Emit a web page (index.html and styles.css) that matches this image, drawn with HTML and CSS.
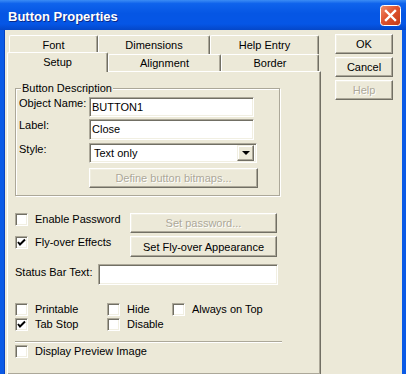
FILE: index.html
```html
<!DOCTYPE html>
<html lang="en">
<head>
  <meta charset="UTF-8" />
  <title>Button Properties</title>
  <link rel="stylesheet" href="styles.css">
</head>
<body>
  <div class="window">
    <div class="titlebar">
      <span class="title">Button Properties</span>
      <span class="close">
        <svg width="21" height="21" viewBox="0 0 21 21">
          <defs>
            <linearGradient id="closeGrad" x1="0" y1="0" x2="1" y2="1">
              <stop offset="0" stop-color="#F0906F"/>
              <stop offset="0.45" stop-color="#E0532F"/>
              <stop offset="1" stop-color="#C23A16"/>
            </linearGradient>
          </defs>
          <rect x="0.5" y="0.5" width="20" height="20" rx="3" fill="url(#closeGrad)" stroke="#fff"/>
          <path d="M6 6 L15 15 M15 6 L6 15" stroke="#fff" stroke-width="2.4" stroke-linecap="square"/>
        </svg>
      </span>
    </div>

    <div class="frame">
      <div class="sheet">
        <div class="tab-row back">
          <div class="tab tab-font">Font</div>
          <div class="tab tab-dim">Dimensions</div>
          <div class="tab tab-help">Help Entry</div>
        </div>
        <div class="tab-row front">
          <div class="tab tab-setup selected">Setup</div>
          <div class="tab tab-align">Alignment</div>
          <div class="tab tab-border">Border</div>
        </div>

        <div class="panel">
          <fieldset class="group">
            <legend>Button Description</legend>
            <div class="field">
              <span class="field-label">Object Name:</span>
              <div class="input input-name">BUTTON1</div>
            </div>
            <div class="field field-label-row">
              <span class="field-label">Label:</span>
              <div class="input input-label">Close</div>
            </div>
            <div class="field field-style">
              <span class="field-label">Style:</span>
              <div class="input combo">
                <span class="combo-text">Text only</span>
                <span class="combo-btn"><span class="arrow"></span></span>
              </div>
            </div>
            <button class="btn btn-define" disabled>Define button bitmaps...</button>
          </fieldset>

          <div class="option-row first">
            <label class="check-item wide"><span class="check"></span>Enable Password</label>
            <button class="btn btn-wide" disabled>Set password...</button>
          </div>
          <div class="option-row second">
            <label class="check-item wide">
              <span class="check"><svg width="11" height="11" viewBox="0 0 11 11"><polyline points="2,5 4,7.5 9,2.5" fill="none" stroke="#000" stroke-width="2"/></svg></span>Fly-over Effects
            </label>
            <button class="btn btn-wide btn-flyover">Set Fly-over Appearance</button>
          </div>

          <div class="status-row">
            <span class="status-label">Status Bar Text:</span>
            <div class="input input-status"></div>
          </div>

          <div class="flags">
            <label class="check-item"><span class="check"></span>Printable</label>
            <label class="check-item"><span class="check"></span>Hide</label>
            <label class="check-item"><span class="check"></span>Always on Top</label>
            <label class="check-item">
              <span class="check"><svg width="11" height="11" viewBox="0 0 11 11"><polyline points="2,5 4,7.5 9,2.5" fill="none" stroke="#000" stroke-width="2"/></svg></span>Tab Stop
            </label>
            <label class="check-item"><span class="check"></span>Disable</label>
          </div>

          <div class="separator"></div>

          <label class="check-item preview"><span class="check"></span>Display Preview Image</label>
        </div>
      </div>

      <div class="actions">
        <button class="btn">OK</button>
        <button class="btn">Cancel</button>
        <button class="btn" disabled>Help</button>
      </div>
    </div>
  </div>
</body>
</html>
```

FILE: styles.css
```css
* {
  margin: 0;
  padding: 0;
  box-sizing: border-box;
}

body {
  width: 406px;
  height: 374px;
  overflow: hidden;
  font-family: "Liberation Sans", Arial, sans-serif;
  font-size: 11px;
  line-height: 13px;
  color: #000;
  background-color: #ECE9D8;
}

.window {
  display: flex;
  flex-direction: column;
  height: 374px;
}

/* title bar */
.titlebar {
  height: 30px;
  flex: none;
  display: flex;
  align-items: center;
  justify-content: space-between;
  padding: 0 5px 0 8px;
  background: linear-gradient(#3B8CF5 0%, #0F63EC 12%, #0556E4 45%, #0556E6 80%, #0447C8 100%);
}

.title {
  color: #fff;
  font-weight: bold;
  font-size: 13px;
  text-shadow: 1px 1px #0A2A8A;
  padding-top: 2px;
}

.close {
  width: 21px;
  height: 21px;
  margin-top: 1px;
}

.close svg {
  display: block;
}

/* window body */
.frame {
  flex: 1;
  display: flex;
  align-items: flex-start;
  padding: 4px 0 0 3px;
  border-left: 4px solid #0A5AE6;
  border-right: 4px solid #0A5AE6;
  box-shadow: inset 1px 0 #0842C0;
}

.sheet {
  width: 314px;
  margin-top: 1px;
  height: 340px;
  display: flex;
  flex-direction: column;
}

.tab-row {
  display: flex;
  padding-left: 2px;
}

.tab-row.back { height: 19px; }
.tab-row.front { height: 17px; }

.tab {
  height: 100%;
  display: flex;
  align-items: center;
  justify-content: center;
  border-top: 1px solid #fff;
  border-left: 1px solid #fff;
  border-right: 1px solid #716F64;
  box-shadow: inset -1px 0 #ACA899;
  border-radius: 2px 2px 0 0;
  background-color: #ECE9D8;
}

.tab-font { width: 89px; }
.tab-dim { width: 112px; }
.tab-help { width: 109px; }
.tab-align { width: 113px; }
.tab-border { width: 98px; }

.tab.selected {
  width: 101px;
  height: 20px;
  margin: -2px 0 -1px -2px;
  position: relative;
  z-index: 1;
}

.panel {
  flex: 1;
  border: 1px solid;
  border-color: #fff #716F64 #716F64 #fff;
  box-shadow: inset -1px -1px #ACA899;
  padding: 10px 0 0 7px;
}

/* group box */
.group {
  width: 265px;
  border: 1px solid #ACA899;
  box-shadow: inset 1px 1px #fff, 1px 1px #fff;
  padding: 2px 0 7px 3px;
}

.group legend {
  margin-left: 2px;
  padding: 0 1px;
  line-height: 13px;
  background-color: #ECE9D8;
}

.field {
  display: flex;
  align-items: flex-start;
}

.field-label {
  width: 70px;
}

.field-label-row { margin-top: 2px; }
.field-style { margin-top: 3px; }

.input {
  background-color: #fff;
  border: 1px solid;
  border-color: #ACA899 #fff #fff #ACA899;
  box-shadow: inset 1px 1px #716F64, inset -1px -1px #F1EFE2;
  padding: 0 2px;
  display: flex;
  align-items: center;
}

.input-name { width: 165px; height: 20px; }
.input-label { width: 165px; height: 21px; }
.input-status { width: 180px; height: 21px; }

.combo {
  width: 168px;
  height: 20px;
  padding: 2px 2px 2px 4px;
  justify-content: space-between;
}

.combo-btn {
  width: 17px;
  height: 16px;
  display: flex;
  align-items: center;
  justify-content: center;
  background-color: #ECE9D8;
  border: 1px solid;
  border-color: #F1EFE2 #716F64 #716F64 #F1EFE2;
  box-shadow: inset -1px -1px #ACA899, inset 1px 1px #fff;
}

.arrow {
  width: 0;
  height: 0;
  border-left: 4px solid transparent;
  border-right: 4px solid transparent;
  border-top: 4px solid #000;
}

/* buttons */
.btn {
  font-family: inherit;
  font-size: 11px;
  color: #000;
  height: 20px;
  background-color: #ECE9D8;
  border: 1px solid;
  border-color: #fff #716F64 #716F64 #fff;
  box-shadow: inset -1px -1px #ACA899, inset 1px 1px #F1EFE2;
}

.btn:disabled {
  color: #ACA899;
  text-shadow: 1px 1px #fff;
}

.btn-define {
  display: block;
  width: 169px;
  margin: 5px 0 0 70px;
}

.btn-wide { width: 147px; }
.btn-flyover { height: 21px; }

/* options */
.option-row {
  display: flex;
  align-items: flex-start;
}

.option-row.first { margin-top: 17px; }
.option-row.second { margin-top: 3px; }

.check-item {
  display: flex;
  align-items: center;
  height: 13px;
  white-space: nowrap;
}

.check-item.wide { width: 115px; }

.check {
  width: 13px;
  height: 13px;
  flex: none;
  margin-right: 7px;
  background-color: #fff;
  border: 1px solid;
  border-color: #ACA899 #fff #fff #ACA899;
  box-shadow: inset 1px 1px #716F64, inset -1px -1px #F1EFE2;
}

.check svg {
  display: block;
}

.status-row {
  display: flex;
  align-items: flex-start;
  margin-top: 7px;
}

.status-label {
  width: 83px;
  padding-top: 2px;
}

.flags {
  display: grid;
  grid-template-columns: 92px 65px auto;
  grid-auto-rows: 13px;
  row-gap: 2px;
  margin-top: 18px;
}

.separator {
  width: 267px;
  height: 2px;
  margin-top: 10px;
  border-top: 1px solid #ACA899;
  border-bottom: 1px solid #fff;
}

.check-item.preview { margin-top: 2px; }

.actions {
  width: 58px;
  margin-left: 14px;
  display: flex;
  flex-direction: column;
  gap: 3px;
}
```
